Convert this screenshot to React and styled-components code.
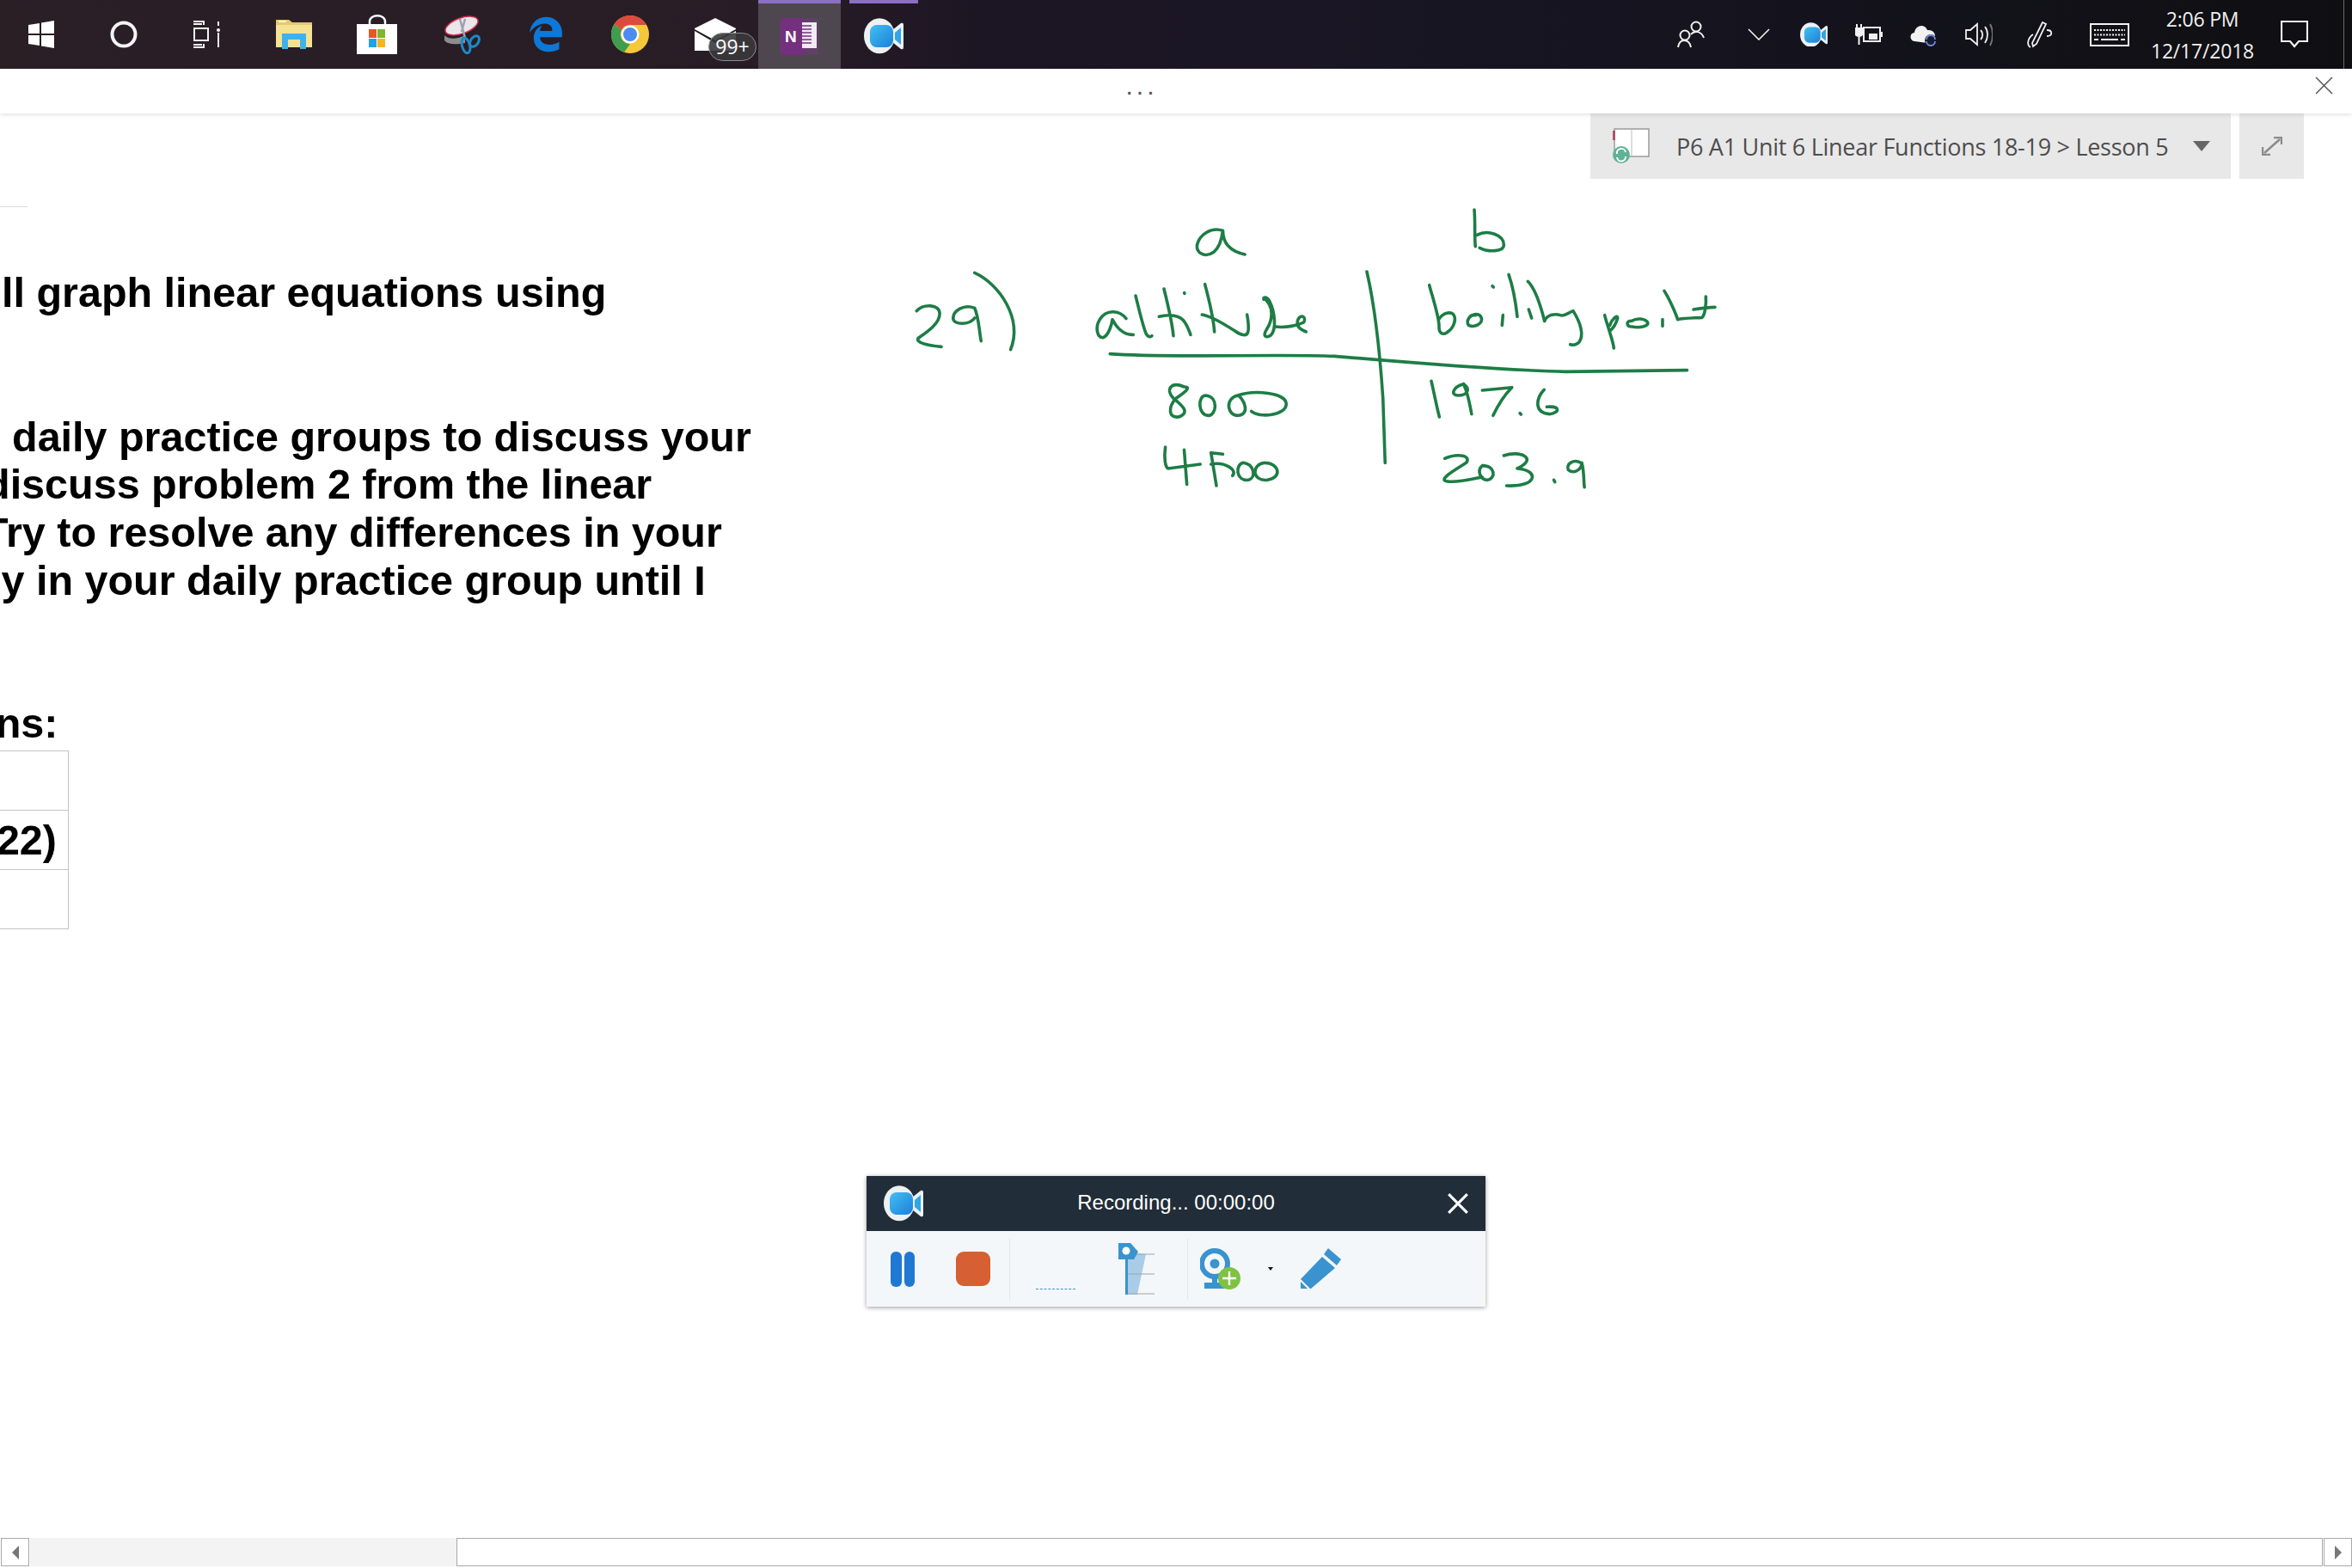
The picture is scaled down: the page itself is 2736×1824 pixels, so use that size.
import React from 'react';
import styled, { createGlobalStyle } from 'styled-components';
import { FaEdgeLegacy } from 'react-icons/fa6';

const GlobalStyle = createGlobalStyle`
  html, body {
    margin: 0;
    padding: 0;
    background: #fff;
  }
`

const Screen = styled.div`
  width: 2736px;
  height: 1824px;
  display: flex;
  flex-direction: column;
  overflow: hidden;
  background: #fff;
  font-family: "Liberation Sans", Arial, sans-serif;
`

// taskbar
const Taskbar = styled.div`
  height: 80px;
  flex: none;
  display: flex;
  align-items: stretch;
  background: linear-gradient(90deg, #2a1f25 0%, #281d26 33%, #1c1523 42%, #1a1625 55%, #15141f 72%, #0f0f12 100%);
`
const AppSlot = styled.div`
  width: ${p => p.$w || 96}px;
  margin-left: ${p => p.$gap || 0}px;
  display: flex;
  align-items: center;
  justify-content: center;
  position: relative;
  box-sizing: border-box;
  background: ${p => p.$active ? '#4f4750' : 'transparent'};
  border-top: ${p => p.$running ? '4px solid #8a6fc4' : '0'};
`
const Badge = styled.span`
  position: absolute;
  left: 42px;
  top: 38px;
  width: 56px;
  height: 33px;
  border-radius: 17px;
  box-sizing: border-box;
  border: 1px solid #8c8c8c;
  background: rgba(58, 56, 60, .9);
  color: #fff;
  font-size: 23px;
  line-height: 31px;
  text-align: center;
  font-family: "Open Sans", sans-serif;
`
const Tray = styled.div`
  margin-left: auto;
  display: flex;
  align-items: center;
`
const TraySlot = styled.div`
  width: ${p => p.$w || 64}px;
  display: flex;
  align-items: center;
  justify-content: center;
`
const Clock = styled.div`
  width: 136px;
  display: flex;
  flex-direction: column;
  align-items: center;
  gap: 11px;
  color: #f0f0f0;
  font-family: "Open Sans", sans-serif;
  font-size: 23px;
  line-height: 26px;
  letter-spacing: -0.2px;
`
const TrayEdge = styled.div`
  width: 9px;
  height: 80px;
  margin-left: 18px;
  border-left: 1px solid #6a6a6a;
`

// strip under the taskbar
const Ribbon = styled.div`
  height: 52px;
  flex: none;
  display: flex;
  align-items: center;
  justify-content: center;
  padding-right: 80px;
  position: relative;
  z-index: 2;
  background: #fff;
  box-shadow: 0 1px 5px rgba(0, 0, 0, .14);
`
const Dots = styled.span`
  color: #555;
  font-size: 30px;
  letter-spacing: 4px;
  line-height: 30px;
  height: 42px;
  font-family: "Liberation Sans", sans-serif;
`
const RibbonClose = styled.div`
  position: absolute;
  right: 22px;
  top: 9px;
  width: 21px;
  height: 21px;
  display: flex;
`

const Content = styled.div`
  flex: 1;
  position: relative;
  overflow: hidden;
`

// notebook picker floating over the page
const PickerRow = styled.div`
  position: absolute;
  top: 0;
  right: 56px;
  display: flex;
  gap: 10px;
  height: 76px;
`
const Picker = styled.div`
  width: 745px;
  background: #e8e8e8;
  display: flex;
  align-items: center;
  padding-left: 25px;
  box-sizing: border-box;
`
const PickerText = styled.span`
  margin-left: 29px;
  width: 574px;
  white-space: nowrap;
  color: #4d4d4d;
  font-family: "Open Sans", sans-serif;
  font-size: 27px;
  letter-spacing: -0.28px;
`
const Caret = styled.span`
  margin-left: 27px;
  width: 0;
  height: 0;
  border-left: 10px solid transparent;
  border-right: 10px solid transparent;
  border-top: 12px solid #666;
`
const ExpandBox = styled.div`
  width: 75px;
  background: #e8e8e8;
  display: flex;
  align-items: center;
  justify-content: center;
`

// page text, scrolled off to the left
const Doc = styled.div`
  padding-top: 108px;
  display: flex;
  flex-direction: column;
`
const Rule = styled.div`
  width: 32px;
  height: 1px;
  background: #dcdcdc;
`
const Line = styled.div`
  margin-top: ${p => p.$top || 0}px;
  margin-left: ${p => p.$left || 0}px;
  font-size: 48.5px;
  font-weight: 700;
  line-height: 55.7px;
  white-space: nowrap;
  color: #000;
`
const TableWrap = styled.div`
  width: 79px;
  margin-top: 4px;
  border-top: 1px solid #c4c4c4;
  border-right: 1px solid #c4c4c4;
`
const Cell = styled.div`
  height: 68px;
  border-bottom: 1px solid #c4c4c4;
  display: flex;
  align-items: center;
  justify-content: flex-end;
  padding-right: 13px;
  font-size: 48.5px;
  font-weight: 700;
  overflow: hidden;
`

// pen strokes over the page
const Ink = styled.svg`
  position: absolute;
  left: 1040px;
  top: 98px;
  width: 980px;
  height: 360px;
  fill: none;
  stroke: #1d7d45;
  stroke-width: 3.6px;
  stroke-linecap: round;
  stroke-linejoin: round;
  path {
    vector-effect: non-scaling-stroke;
  }
`

// recorder floating window
const Recorder = styled.div`
  position: absolute;
  left: 1008px;
  top: 1236px;
  width: 720px;
  height: 152px;
  display: flex;
  flex-direction: column;
  box-shadow: 0 1px 5px rgba(0, 0, 0, .4);
`
const RecHead = styled.div`
  height: 64px;
  flex: none;
  background: #212d38;
  display: flex;
  align-items: center;
  padding: 0 20px;
  position: relative;
`
const RecTitle = styled.div`
  position: absolute;
  left: 0;
  right: 0;
  text-align: center;
  color: #fff;
  font-size: 24px;
  top: 17px;
  line-height: 28px;
`
const RecClose = styled.div`
  margin-left: auto;
  display: flex;
`
const RecBody = styled.div`
  flex: 1;
  background: #f3f7f9;
  display: flex;
  align-items: center;
`
const RecGroup = styled.div`
  width: ${p => p.$w}px;
  height: 72px;
  display: flex;
  align-items: center;
  box-sizing: border-box;
  padding-left: ${p => p.$pad || 0}px;
  border-right: ${p => p.$sep ? '1px solid #e4e8ea' : '0'};
`
const PauseBars = styled.div`
  width: 28px;
  height: 41px;
  margin-right: 48px;
  display: flex;
  gap: 3px;
  &::before, &::after {
    content: '';
    width: 12.5px;
    border-radius: 6px;
    background: #1f78d1;
  }
`
const StopBox = styled.div`
  width: 40px;
  height: 40px;
  background: #d65f33;
  border-radius: 9px;
`
const MeterDots = styled.div`
  width: 46px;
  height: 1px;
  margin-top: 48px;
  border-top: 1px dashed #3d93cf;
  margin-right: 50px;
`
const TinyCaret = styled.span`
  margin: 0 32px 0 31px;
  width: 0;
  height: 0;
  border-left: 3px solid transparent;
  border-right: 3px solid transparent;
  border-top: 4px solid #111;
`

// scrollbar along the bottom
const ScrollBar = styled.div`
  height: 35px;
  flex: none;
  display: flex;
  align-items: stretch;
  padding-bottom: 2px;
  box-sizing: border-box;
  background: #fff;
`
const ScrollBtn = styled.div`
  width: 33px;
  box-sizing: border-box;
  margin: 0 ${p => p.$right ? 0 : 1}px 0 1px;
  border: 1px solid #a8a8a8;
  display: flex;
  align-items: center;
  justify-content: center;
  background: #fff;
`
const Arrow = styled.span`
  width: 0;
  height: 0;
  border-top: 8px solid transparent;
  border-bottom: 8px solid transparent;
  ${p => p.$right ? 'border-left: 8px solid #777;' : 'border-right: 8px solid #777;'}
`
const Track = styled.div`
  width: 496px;
  background: #f3f3f3;
`
const Thumb = styled.div`
  flex: 1;
  background: #fff;
  border: 1px solid #a8a8a8;
`

const RecIcon = ({ size = 46, id }) => (
  <svg width={size} height={size * 0.9} viewBox="0 0 46 41.4">
    <defs>
      <linearGradient id={id} x1="0" y1="0" x2="1" y2="1">
        <stop offset="0" stopColor="#42c0f0" />
        <stop offset="1" stopColor="#1c7fdc" />
      </linearGradient>
    </defs>
    <path d="M33 14 L43 6 C46 5 46 7 46 9 V33 C46 35 46 37 43 36 L33 28 Z" fill="#eef2f5" />
    <path d="M36 17 L43 11 V31 L36 25 Z" fill="#2ea6e8" />
    <ellipse cx="18" cy="20.7" rx="18" ry="20.5" fill="#eef1f4" />
    <rect x="7" y="8" width="27" height="26" rx="8" fill={`url(#${id})`} />
  </svg>
)

const WinLogo = () => (
  <svg width="30" height="32" viewBox="0 0 30 32" fill="#fff">
    <path d="M0 5 L13 3 V15 H0 Z M15 2.6 L30 0 V15 H15 Z M0 17 H13 V29 L0 27 Z M15 17 H30 V32 L15 29.4 Z" />
  </svg>
)
const Cortana = () => (
  <svg width="32" height="32" viewBox="0 0 32 32" fill="none">
    <circle cx="16" cy="16" r="13.5" stroke="#f4f4f4" strokeWidth="4" />
  </svg>
)
const TaskView = () => (
  <svg width="32" height="32" viewBox="0 0 32 32" fill="none" stroke="#f4f4f4" strokeWidth="2">
    <path d="M1 1 H13 V5 M1 31 H13 V27" />
    <rect x="2" y="9" width="16" height="14" />
    <path d="M1 4 H11 M1 28 H11 M30 1 V6 M30 14 V31" />
    <circle cx="30" cy="11" r="2" fill="#f4f4f4" stroke="none" />
  </svg>
)
const Folder = () => (
  <svg width="42" height="36" viewBox="0 0 42 36">
    <path d="M0 1 H15 L19 4 H42 V33 H0 Z" fill="#e5c971" />
    <rect x="0" y="7" width="42" height="26" fill="#f5e393" />
    <rect x="3" y="2" width="9" height="2" fill="#f8f0c8" />
    <path d="M7 35 V17 H35 V35 H28 V24 H14 V35 Z" fill="#3fb2ec" />
  </svg>
)
const Store = () => (
  <svg width="48" height="46" viewBox="0 0 48 46">
    <path d="M15 14 V8 C15 -1 33 -1 33 8 V14" fill="none" stroke="#fff" strokeWidth="2.5" />
    <rect x="0" y="11" width="47" height="35" fill="#fff" />
    <rect x="14" y="17" width="9" height="10" fill="#e8552c" />
    <rect x="24" y="17" width="9" height="10" fill="#7db72f" />
    <rect x="14" y="28" width="9" height="10" fill="#1fa3e6" />
    <rect x="24" y="28" width="9" height="10" fill="#f8b418" />
  </svg>
)
const Snip = () => (
  <svg width="44" height="46" viewBox="0 0 44 46">
    <path d="M2 24 C8 30 18 28 26 24 L26 33 C16 35 6 35 2 30 Z" fill="#8d8d8f" />
    <ellipse cx="22" cy="13" rx="20" ry="9" transform="rotate(-20 22 13)" fill="#eae6ea" stroke="#c9304f" strokeWidth="1.5" />
    <path d="M20 5 L26 27 M26 5 L22 20" stroke="#9aa3ae" strokeWidth="2.5" />
    <ellipse cx="27" cy="36" rx="4.5" ry="9" transform="rotate(-15 27 36)" fill="none" stroke="#1f88c9" strokeWidth="3" />
    <ellipse cx="37" cy="31" rx="4.5" ry="7" transform="rotate(35 37 31)" fill="none" stroke="#1f88c9" strokeWidth="3" />
  </svg>
)
const Chrome = () => (
  <svg width="44" height="44" viewBox="0 0 44 44">
    <circle cx="22" cy="22" r="22" fill="#f5c839" />
    <path d="M22 0 A22 22 0 0 1 41 11 H22 A11 11 0 0 0 12 17 L3.5 10 A22 22 0 0 1 22 0 Z" fill="#dc4b3e" />
    <path d="M3.5 10 L12 17 A11 11 0 0 0 22 33 L15 43 A22 22 0 0 1 3.5 10 Z" fill="#3f9d4f" />
    <circle cx="22" cy="22" r="10.5" fill="#fff" />
    <circle cx="22" cy="22" r="8" fill="#4c8bf0" />
  </svg>
)
const Mail = () => (
  <svg width="48" height="38" viewBox="0 0 48 38">
    <path d="M0 12 L24 0 L48 12 V38 H0 Z" fill="#fff" />
    <path d="M0 13 L24 26 L48 13 L48 15 L24 29 L0 15 Z" fill="#241c22" />
  </svg>
)
const OneNote = () => (
  <svg width="44" height="43" viewBox="0 0 44 43">
    <rect x="0" y="0" width="44" height="43" rx="3" fill="#5f4164" />
    <rect x="0" y="0" width="28" height="43" rx="3" fill="#74307f" />
    <rect x="25" y="5" width="17" height="30" fill="#f2ebf3" />
    <path d="M25 9 H36 M25 13 H36 M25 17 H36 M25 21 H36 M25 25 H36 M25 29 H36" stroke="#74307f" strokeWidth="1.3" />
    <text x="5" y="28" fontSize="19" fontWeight="700" fill="#fff" fontFamily="Liberation Sans, sans-serif">N</text>
  </svg>
)
const People = () => (
  <svg width="32" height="32" viewBox="0 0 32 32" fill="none" stroke="#f0f0f0" strokeWidth="2">
    <circle cx="9" cy="17" r="5.5" />
    <path d="M1 31 C2 25 5 23 8 23 C12 23 15 26 16 31" />
    <circle cx="22" cy="7" r="5.5" />
    <path d="M16 16 C20 11 28 12 31 20" />
  </svg>
)
const Chevron = () => (
  <svg width="26" height="14" viewBox="0 0 26 14" fill="none" stroke="#f0f0f0" strokeWidth="1.6">
    <path d="M1 1 L13 13 L25 1" />
  </svg>
)
const Battery = () => (
  <svg width="32" height="24" viewBox="0 0 32 24" fill="none" stroke="#f0f0f0" strokeWidth="2">
    <rect x="10" y="4" width="19" height="16" />
    <path d="M31 9 V15" />
    <path d="M2 0 V5 M7 0 V5" />
    <path d="M0 5 H9 V10 C9 13 6 14 4.5 14 C3 14 0 13 0 10 Z M4.5 14 V24" fill="#f0f0f0" />
    <rect x="16" y="11" width="10" height="7" fill="#f0f0f0" stroke="none" />
  </svg>
)
const CloudSync = () => (
  <svg width="32" height="28" viewBox="0 0 32 28">
    <path d="M5 22 C-1 21 -1 12 5 12 C6 3 17 1 20 9 C27 8 31 14 28 20 L20 24 Z" fill="#f2f2f2" />
    <circle cx="24" cy="21" r="7" fill="#1a1a2c" />
    <path d="M19 20 A5 5 0 0 1 29 20 M29 22 A5 5 0 0 1 19 22" fill="none" stroke="#6e8fe0" strokeWidth="1.8" />
  </svg>
)
const Volume = () => (
  <svg width="32" height="28" viewBox="0 0 32 28" fill="none" stroke="#f0f0f0" strokeWidth="1.8">
    <path d="M1 9 H6 L14 2 V26 L6 19 H1 Z" />
    <path d="M18 9 C21 12 21 17 18 20" />
    <path d="M23 5 C27 10 27 18 23 24" />
    <path d="M29 2 C33 9 33 19 29 27" stroke="#777" />
  </svg>
)
const Pen = () => (
  <svg width="32" height="32" viewBox="0 0 32 32" fill="none" stroke="#f0f0f0" strokeWidth="1.8">
    <path d="M18 2 L22 4 L11 27 L7 30 L6 26 Z" />
    <path d="M23 11 C30 11 30 18 23 18" />
    <path d="M7 16 C1 20 -1 28 4 31" />
  </svg>
)
const Keyboard = () => (
  <svg width="46" height="27" viewBox="0 0 46 27" fill="none" stroke="#f4f4f4">
    <rect x="1" y="1" width="44" height="25" strokeWidth="2" />
    <path d="M5 8 H41 M5 13.5 H41" strokeWidth="2" strokeDasharray="2 1.5" />
    <path d="M5 19 H10 M13 19 H33 M36 19 H41" strokeWidth="2" />
  </svg>
)
const Notify = () => (
  <svg width="32" height="32" viewBox="0 0 32 32" fill="none" stroke="#f4f4f4" strokeWidth="2.2">
    <path d="M1 1 H31 V24 H21 L16 30 L11 24 H1 Z" />
  </svg>
)
const CrossIcon = ({ size, color, weight }) => (
  <svg width={size} height={size} viewBox="0 0 20 20" stroke={color} strokeWidth={weight} fill="none">
    <path d="M1 1 L19 19 M19 1 L1 19" />
  </svg>
)
const BookIcon = () => (
  <svg width="46" height="42" viewBox="0 0 46 42">
    <rect x="3" y="1" width="40" height="32" fill="#fff" stroke="#9a9a9a" strokeWidth="1.5" />
    <path d="M23 1 V33" stroke="#bbb" />
    <path d="M1 3 H4 V14 H1 Z" fill="#b2506a" />
    <circle cx="11" cy="31" r="10" fill="#5fb296" />
    <path d="M6 30 A5 5 0 0 1 16 28 M16 33 A5 5 0 0 1 6 34" stroke="#fff" strokeWidth="2" fill="none" />
  </svg>
)
const ExpandIcon = () => (
  <svg width="24" height="22" viewBox="0 0 24 22" fill="none" stroke="#8b8b8b" strokeWidth="2.4">
    <path d="M3 19 L21 3" />
    <path d="M14 1 H23 V9" />
    <path d="M1 12 V21 H10" />
  </svg>
)
const AudioIcon = () => (
  <svg width="42" height="60" viewBox="0 0 42 60">
    <path d="M8 10 L32 13 L22 60 L8 60 Z" fill="#a9cde8" />
    <path d="M20 13 H42 M8 36 H42 M8 59 H42" stroke="#9aa5ad" strokeWidth="1" />
    <rect x="8" y="14" width="3" height="46" fill="#3a92cf" />
    <path d="M0 0 H14 L23 10 L18 19 H0 Z" fill="#3a92cf" />
    <circle cx="9" cy="9" r="4.5" fill="#fff" />
  </svg>
)
const WebcamIcon = () => (
  <svg width="48" height="48" viewBox="0 0 48 48">
    <circle cx="17" cy="18" r="15" fill="none" stroke="#3a92cf" strokeWidth="6" />
    <circle cx="17" cy="18" r="5.5" fill="#3a92cf" />
    <rect x="14" y="32" width="6" height="10" fill="#3a92cf" />
    <rect x="5" y="40" width="24" height="7" fill="#3a92cf" />
    <circle cx="34" cy="35" r="13" fill="#7fc241" />
    <path d="M34 27 V43 M26 35 H42" stroke="#fff" strokeWidth="2.4" />
  </svg>
)
const PencilIcon = () => (
  <svg width="48" height="48" viewBox="0 0 48 48" fill="#3a92cf">
    <path d="M32 0 L47 13 L42 20 L27 7 Z" />
    <path d="M25 10 L40 23 L12 47 H11 L0 36 Z" />
    <path d="M0 39 V47 H8 Z" />
  </svg>
)

// coordinates below are on a 1568x1080 grid stretched over the ink area
const inkStrokes = [
  'M612 115 C590 100 568 130 564 165 C562 195 580 210 595 190 C605 175 610 145 612 115 C612 150 620 185 653 198',
  'M1080 42 C1082 90 1080 130 1082 170 M1085 130 C1105 110 1135 130 1135 165 C1135 190 1105 190 1090 175',
  'M150 262 C195 300 240 420 217 530',
  'M42 395 C55 370 85 370 85 405 C85 440 60 470 45 490 C40 505 60 515 88 520',
  'M150 385 C130 370 110 395 110 420 C110 445 140 445 150 420 M150 385 C158 420 158 460 162 500',
  'M402 545 C500 560 700 545 820 553 C900 565 1100 600 1250 607 L1476 602',
  'M880 258 C895 380 905 560 910 700 L914 925',
  'M540 660 C515 640 505 670 520 700 C540 730 550 750 530 765 C510 770 510 730 525 700 C540 680 555 660 540 660',
  'M580 690 C565 690 565 760 585 760 C600 760 605 695 580 690',
  'M640 690 C615 700 620 760 640 760 C665 755 650 700 640 690 C670 670 730 680 730 720 C730 760 680 770 665 745',
  'M1000 640 C1005 680 1010 730 1015 765',
  'M1060 650 C1040 660 1035 690 1050 690 C1065 690 1075 670 1060 650 C1070 690 1072 730 1075 755',
  'M1095 672 L1150 662 C1135 690 1125 720 1115 760',
  'M1165 752 L1167 756',
  'M1210 670 C1195 700 1190 750 1220 755 C1240 750 1240 725 1215 730',
  'M505 870 C502 910 505 940 510 945 L570 930 M540 880 L545 1000',
  'M612 895 L590 890 L600 1005 M590 930 C615 920 640 950 630 970',
  'M650 925 C635 930 635 990 660 985 C675 975 670 930 650 925',
  'M690 925 C665 930 665 990 695 985 C725 975 715 925 690 925',
  'M1025 910 C1050 890 1075 900 1065 925 C1045 950 1010 985 1030 990 C1050 995 1080 980 1095 975',
  'M1095 935 C1085 950 1090 985 1105 985 C1120 980 1120 935 1095 935',
  'M1135 900 C1165 880 1200 910 1160 945 C1200 950 1200 1010 1140 1005',
  'M1228 985 L1230 992',
  'M1278 925 C1265 910 1250 930 1255 950 C1265 965 1280 950 1280 925 C1285 960 1283 985 1285 1010',
]

// these two words are traced on a plain 3x grid, see the group transforms
const altitudeStrokes = [
  'M120 212 C95 180 50 180 28 215 C10 245 20 280 40 278 C60 270 70 230 72 215 C85 240 110 270 145 268',
  'M153 132 C165 180 180 245 190 265 C195 275 205 278 210 272',
  'M252 108 C265 160 280 220 285 272 M235 205 C270 195 310 200 325 225 C335 240 340 255 345 268',
  'M323 122 L324 124',
  'M395 92 C405 130 425 210 428 258 M385 198 C420 205 460 230 500 255 C520 270 540 275 545 260 C550 240 545 215 542 198',
  'M600 140 C640 170 630 220 610 250 C595 275 610 280 625 270 C645 250 640 190 620 150 C610 135 600 135 600 145',
  'M640 240 C680 245 720 235 740 225 C750 205 730 195 720 215 C710 240 730 250 748 258',
]
const boilingStrokes = [
  'M38 65 C50 110 70 170 72 205 C70 235 85 240 100 230 C125 215 135 180 120 165 C100 155 80 170 70 185',
  'M200 170 C180 165 165 190 175 205 C195 215 225 200 220 180 C215 165 200 165 190 170',
  'M295 170 L292 205 M258 68 L262 72',
  'M315 28 C330 70 340 130 345 175',
  'M385 150 L395 180',
  'M382 52 C410 80 430 150 440 190',
  'M440 190 C450 165 480 165 495 170 C510 175 525 160 540 155 C565 195 580 240 560 265 C550 275 540 275 530 272',
  'M650 170 C660 210 680 260 682 285 M668 205 C675 185 695 165 695 180 C690 200 680 215 668 225',
  'M740 190 C725 190 725 210 745 210 C770 215 805 210 800 195 C790 180 760 180 745 190',
  'M852 185 L852 208',
  'M858 85 C880 120 900 170 905 185 C925 180 960 180 990 178 C1000 170 1005 130 1003 105',
  'M960 150 C990 145 1020 142 1035 142',
]

const App = () => (
  <>
    <GlobalStyle />
    <Screen>
      <Taskbar>
        <AppSlot><WinLogo /></AppSlot>
        <AppSlot><Cortana /></AppSlot>
        <AppSlot><TaskView /></AppSlot>
        <AppSlot $gap={6}><Folder /></AppSlot>
        <AppSlot $w={98}><Store /></AppSlot>
        <AppSlot $w={98}><Snip /></AppSlot>
        <AppSlot $w={98}><FaEdgeLegacy size={42} color="#0c78d8" /></AppSlot>
        <AppSlot $w={98}><Chrome /></AppSlot>
        <AppSlot $w={100}>
          <Mail />
          <Badge>99+</Badge>
        </AppSlot>
        <AppSlot $active $running><OneNote /></AppSlot>
        <AppSlot $gap={10} $w={80} $running><RecIcon id="rec-task" size={46} /></AppSlot>
        <Tray>
          <TraySlot $w={94}><People /></TraySlot>
          <TraySlot><Chevron /></TraySlot>
          <TraySlot><RecIcon id="rec-tray" size={32} /></TraySlot>
          <TraySlot><Battery /></TraySlot>
          <TraySlot><CloudSync /></TraySlot>
          <TraySlot><Volume /></TraySlot>
          <TraySlot $w={80}><Pen /></TraySlot>
          <TraySlot $w={80}><Keyboard /></TraySlot>
          <Clock>
            <span>2:06 PM</span>
            <span>12/17/2018</span>
          </Clock>
          <TraySlot $w={78}><Notify /></TraySlot>
          <TrayEdge />
        </Tray>
      </Taskbar>
      <Ribbon>
        <Dots>...</Dots>
        <RibbonClose><CrossIcon size={21} color="#555" weight={1.4} /></RibbonClose>
      </Ribbon>
      <Content>
        <Doc>
          <Rule />
          <Line $top={72} $left={2}>ll graph linear equations using</Line>
          <Line $top={112} $left={14}>daily practice groups to discuss your</Line>
          <Line $left={-18}>discuss problem 2 from the linear</Line>
          <Line $left={-20}>Try to resolve any differences in your</Line>
          <Line $left={-12}>ly in your daily practice group until I</Line>
          <Line $top={110} $left={-35}>ons:</Line>
          <TableWrap>
            <Cell />
            <Cell>22)</Cell>
            <Cell />
          </TableWrap>
        </Doc>
        <PickerRow>
          <Picker>
            <BookIcon />
            <PickerText>P6 A1 Unit 6 Linear Functions 18-19 &gt; Lesson 5</PickerText>
            <Caret />
          </Picker>
          <ExpandBox><ExpandIcon /></ExpandBox>
        </PickerRow>
        <Ink viewBox="0 0 1568 1080" preserveAspectRatio="none">
          {inkStrokes.map((d, i) => <path key={i} d={d} />)}
          <g transform="translate(368 210) scale(.5333 1)">
            {altitudeStrokes.map((d, i) => <path key={i} d={d} />)}
          </g>
          <g transform="translate(976 240) scale(.5333 1)">
            {boilingStrokes.map((d, i) => <path key={i} d={d} />)}
          </g>
        </Ink>
        <Recorder>
          <RecHead>
            <RecIcon id="rec-head" size={46} />
            <RecTitle>Recording... 00:00:00</RecTitle>
            <RecClose><CrossIcon size={24} color="#fff" weight={2.6} /></RecClose>
          </RecHead>
          <RecBody>
            <RecGroup $w={167} $pad={28} $sep>
              <PauseBars />
              <StopBox />
            </RecGroup>
            <RecGroup $w={207} $pad={30} $sep>
              <MeterDots />
              <AudioIcon />
            </RecGroup>
            <RecGroup $w={300} $pad={14}>
              <WebcamIcon />
              <TinyCaret />
              <PencilIcon />
            </RecGroup>
          </RecBody>
        </Recorder>
      </Content>
      <ScrollBar>
        <ScrollBtn><Arrow /></ScrollBtn>
        <Track />
        <Thumb />
        <ScrollBtn $right><Arrow $right /></ScrollBtn>
      </ScrollBar>
    </Screen>
  </>
);

export default App;
